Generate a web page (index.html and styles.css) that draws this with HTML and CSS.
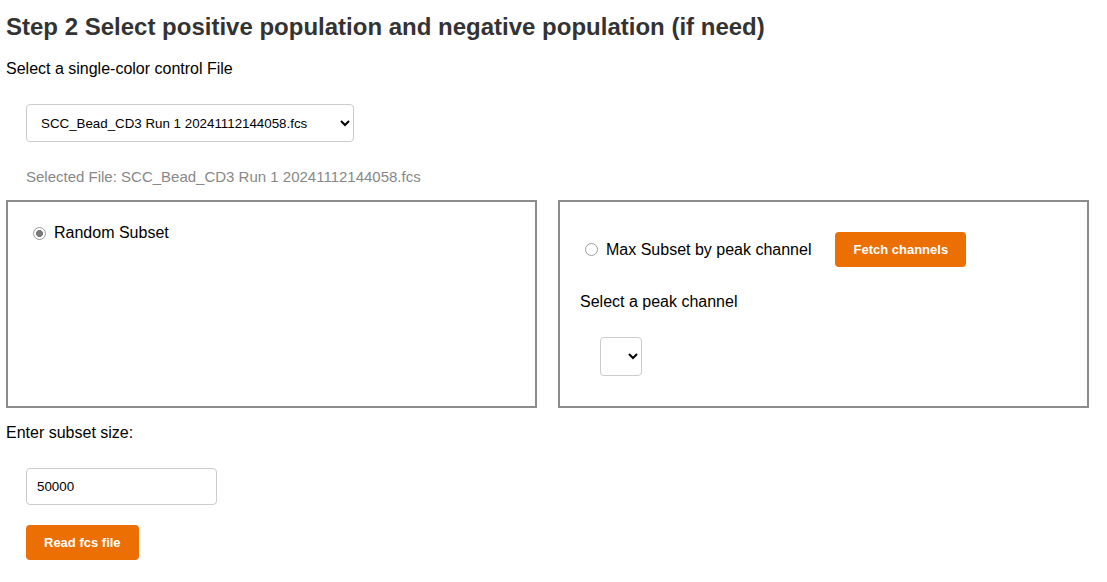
FILE: index.html
```html
<!DOCTYPE html>
<html>
<head>
<meta charset="utf-8">
<link rel="stylesheet" href="styles.css">
</head>
<body>
<div class="page">
  <h1 class="title">Step 2 Select positive population and negative population (if need)</h1>
  <div class="label">Select a single-color control File</div>
  <select class="file-select">
    <option>SCC_Bead_CD3 Run 1 20241112144058.fcs</option>
  </select>
  <div class="selected">Selected File: SCC_Bead_CD3 Run 1 20241112144058.fcs</div>
  <div class="boxes">
    <div class="box">
      <label class="radio-row radio-row-left">
        <input type="radio" name="mode" checked class="radio">
        <span>Random Subset</span>
      </label>
    </div>
    <div class="box">
      <div class="radio-row">
        <input type="radio" name="mode" class="radio">
        <span>Max Subset by peak channel</span>
        <button class="btn btn-fetch">Fetch channels</button>
      </div>
      <div class="label peak-label">Select a peak channel</div>
      <select class="peak-select"></select>
    </div>
  </div>
  <div class="label subset-label">Enter subset size:</div>
  <input class="size-input" type="text" value="50000">
  <button class="btn btn-read">Read fcs file</button>
</div>
</body>
</html>
```
FILE: styles.css
```css
html, body {
  margin: 0;
  padding: 0;
  background: #fff;
}
.page {
  padding: 0 6px;
  font-family: "Liberation Sans", Arial, sans-serif;
  color: #000;
  display: flex;
  flex-direction: column;
  align-items: flex-start;
}
.title {
  margin: 13px 0 0 0;
  font-size: 24px;
  line-height: 28px;
  font-weight: bold;
  color: #333;
}
.label {
  font-size: 16px;
  line-height: 18px;
  margin-top: 19px;
}
.file-select {
  margin: 26px 0 0 20px;
  width: 328px;
  height: 38px;
  border: 1px solid #ccc;
  border-radius: 4px;
  background: #fff;
  font-family: "Liberation Sans", Arial, sans-serif;
  font-size: 13.33px;
  color: #000;
  padding: 0 8px 0 10px;
}
.selected {
  margin: 26px 0 0 20px;
  font-size: 15px;
  line-height: 17px;
  color: #888;
}
.boxes {
  display: flex;
  gap: 21px;
  margin-top: 15px;
}
.box {
  width: 531px;
  height: 208px;
  box-sizing: border-box;
  border: 2px solid #8c8c8c;
  padding: 20px;
  display: flex;
  flex-direction: column;
  align-items: flex-start;
}
.radio-row {
  display: flex;
  align-items: center;
  font-size: 16px;
  line-height: 18px;
}
.radio-row-left {
  margin-top: 2px;
}
.radio {
  appearance: none;
  -webkit-appearance: none;
  box-sizing: border-box;
  width: 13px;
  height: 13px;
  margin: 0 8px 0 5px;
  border: 1px solid #a0a0a0;
  border-radius: 50%;
  background: #fff;
}
.radio:checked {
  background: radial-gradient(circle, #7a7a7a 0 3.2px, #fff 3.8px 100%);
  border-color: #9a9a9a;
}
.btn {
  height: 35px;
  padding: 0 18px;
  border: none;
  border-radius: 4px;
  background: #ec6f03;
  color: #fff;
  font-family: "Liberation Sans", Arial, sans-serif;
  font-size: 13px;
  font-weight: bold;
}
.btn-fetch {
  margin: 10px 0 10px 24px;
}
.peak-label {
  margin-top: 16px;
}
.peak-select {
  margin: 26px 0 0 20px;
  width: 42px;
  height: 39px;
  border: 1px solid #ccc;
  border-radius: 4px;
  background: #fff;
}
.subset-label {
  margin-top: 16px;
}
.size-input {
  margin: 26px 0 0 20px;
  width: 191px;
  height: 37px;
  box-sizing: border-box;
  border: 1px solid #ccc;
  border-radius: 4px;
  padding: 0 10px;
  font-family: "Liberation Sans", Arial, sans-serif;
  font-size: 13.33px;
  color: #000;
}
.btn-read {
  margin: 20px 0 0 20px;
}
```
